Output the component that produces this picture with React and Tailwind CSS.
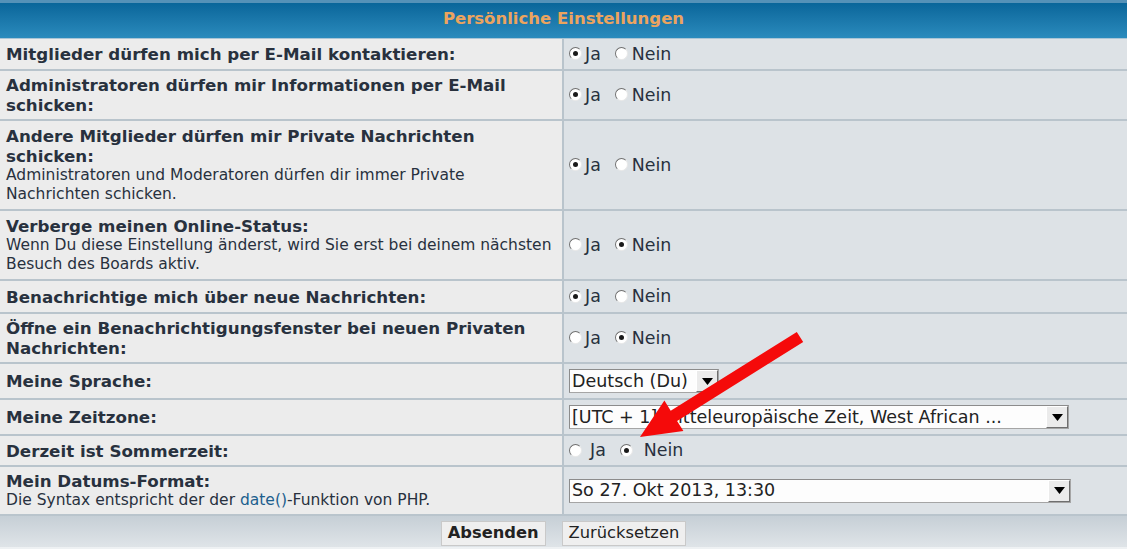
import React from "react";

const FONT = { fontFamily: '"DejaVu Sans", Verdana, sans-serif' };

function Radio({ checked }) {
  return (
    <span className="relative inline-flex w-[13px] h-[13px] rounded-full bg-white border border-t-[#6f6f6f] border-l-[#6f6f6f] border-r-[#e8e8e8] border-b-[#e8e8e8] items-center justify-center shrink-0">
      {checked ? <span className="w-[5px] h-[5px] rounded-full bg-[#1a1a1a]" /> : null}
    </span>
  );
}

function YesNo({ yes, wide }) {
  if (wide) {
    return (
      <div className="flex items-center text-[17.4px] text-[#28313e]">
        <Radio checked={yes} />
        <span className="ml-[8px]">Ja</span>
        <span className="ml-[14px] flex"><Radio checked={!yes} /></span>
        <span className="ml-[11px]">Nein</span>
      </div>
    );
  }
  return (
    <div className="flex items-center text-[17.4px] text-[#28313e]">
      <Radio checked={yes} />
      <span className="ml-[3px]">Ja</span>
      <span className="ml-[14px] flex"><Radio checked={!yes} /></span>
      <span className="ml-[4px]">Nein</span>
    </div>
  );
}

function Select({ text, widthClass }) {
  return (
    <div className={"flex h-[24px] bg-[#fdfdfd] border border-[#a5a5a5] border-t-[#8c8c8c] border-l-[#8c8c8c] " + widthClass}>
      <div className="flex-1 flex items-center pl-[2px] text-[17.5px] text-[#222] whitespace-nowrap overflow-hidden">{text}</div>
      <div className="w-[22px] h-full flex items-center justify-center bg-[#ebebeb] border border-t-white border-l-white border-r-[#6f6f6f] border-b-[#6f6f6f]">
        <svg width="11" height="7" viewBox="0 0 11 7"><polygon points="0,0 11,0 5.5,7" fill="#000" /></svg>
      </div>
    </div>
  );
}

function Row({ hClass, children, right }) {
  return (
    <div className={"flex border-b-2 border-[#b9c4cc] " + hClass}>
      <div className="w-[562px] shrink-0 bg-[#ececec] pl-[6px] pr-1 flex flex-col justify-center text-[#28313e]">
        {children}
      </div>
      <div className="flex-1 bg-[#dde2e6] border-l-2 border-[#b9c4cc] pl-[5px] flex items-center">
        {right}
      </div>
    </div>
  );
}

function B({ children }) {
  return <div className="font-bold text-[16.7px] leading-[20px] whitespace-nowrap">{children}</div>;
}
function S({ children }) {
  return <div className="text-[15.5px] leading-[19px] whitespace-nowrap">{children}</div>;
}

export default function App() {
  return (
    <div className="relative w-[1127px] h-[549px] overflow-hidden bg-[#dde2e6]" style={FONT}>
      <div className="h-[39px] border-t-[3px] border-t-[#5592b8] border-b border-b-[#a9c5d6] bg-gradient-to-b from-[#09669a] to-[#2a8bbd] flex items-center justify-center">
        <span className="font-bold text-[16.5px] text-[#eca45e] -mt-[2px]">Persönliche Einstellungen</span>
      </div>

      <Row hClass="h-[32px]" right={<YesNo yes />}>
        <B>Mitglieder dürfen mich per E-Mail kontaktieren:</B>
      </Row>
      <Row hClass="h-[50px]" right={<YesNo yes />}>
        <B>Administratoren dürfen mir Informationen per E-Mail</B>
        <B>schicken:</B>
      </Row>
      <Row hClass="h-[90px]" right={<YesNo yes />}>
        <B>Andere Mitglieder dürfen mir Private Nachrichten</B>
        <B>schicken:</B>
        <S>Administratoren und Moderatoren dürfen dir immer Private</S>
        <S>Nachrichten schicken.</S>
      </Row>
      <Row hClass="h-[70px]" right={<YesNo yes={false} />}>
        <B>Verberge meinen Online-Status:</B>
        <S>Wenn Du diese Einstellung änderst, wird Sie erst bei deinem nächsten</S>
        <S>Besuch des Boards aktiv.</S>
      </Row>
      <Row hClass="h-[33px]" right={<YesNo yes />}>
        <B>Benachrichtige mich über neue Nachrichten:</B>
      </Row>
      <Row hClass="h-[50px]" right={<YesNo yes={false} />}>
        <B>Öffne ein Benachrichtigungsfenster bei neuen Privaten</B>
        <B>Nachrichten:</B>
      </Row>
      <Row hClass="h-[36px]" right={<Select text="Deutsch (Du)" widthClass="w-[150px]" />}>
        <B>Meine Sprache:</B>
      </Row>
      <Row hClass="h-[36px]" right={<Select text="[UTC + 1] Mitteleuropäische Zeit, West African ..." widthClass="w-[500px]" />}>
        <B>Meine Zeitzone:</B>
      </Row>
      <Row hClass="h-[31px]" right={<YesNo yes={false} wide />}>
        <B>Derzeit ist Sommerzeit:</B>
      </Row>
      <Row hClass="h-[49px]" right={<Select text="So 27. Okt 2013, 13:30" widthClass="w-[502px]" />}>
        <B>Mein Datums-Format:</B>
        <S>
          Die Syntax entspricht der der <span className="text-[#1d5f8e]">date()</span>-Funktion von PHP.
        </S>
      </Row>

      <div className="h-[33px] pt-[3px] bg-gradient-to-b from-[#c6cfd6] to-[#dfe4e8] border-b-2 border-[#eef1f3] flex items-center justify-center gap-[16px]">
        <button className="h-[25px] px-[6px] bg-[#efefef] border border-[#c9c9c9] font-bold text-[16.3px] text-[#222] flex items-center">Absenden</button>
        <button className="h-[25px] px-[6px] bg-[#efefef] border border-[#c9c9c9] text-[16.3px] text-[#222] flex items-center">Zurücksetzen</button>
      </div>

      <svg className="absolute left-0 top-0 pointer-events-none" width="1127" height="549" viewBox="0 0 1127 549">
        <polygon
          points="796.8,331.9 803.2,342.1 677.1,420.9 683.4,431.1 640,437 664.4,400.5 670.7,410.7"
          fill="#f50a0a"
        />
      </svg>
    </div>
  );
}
